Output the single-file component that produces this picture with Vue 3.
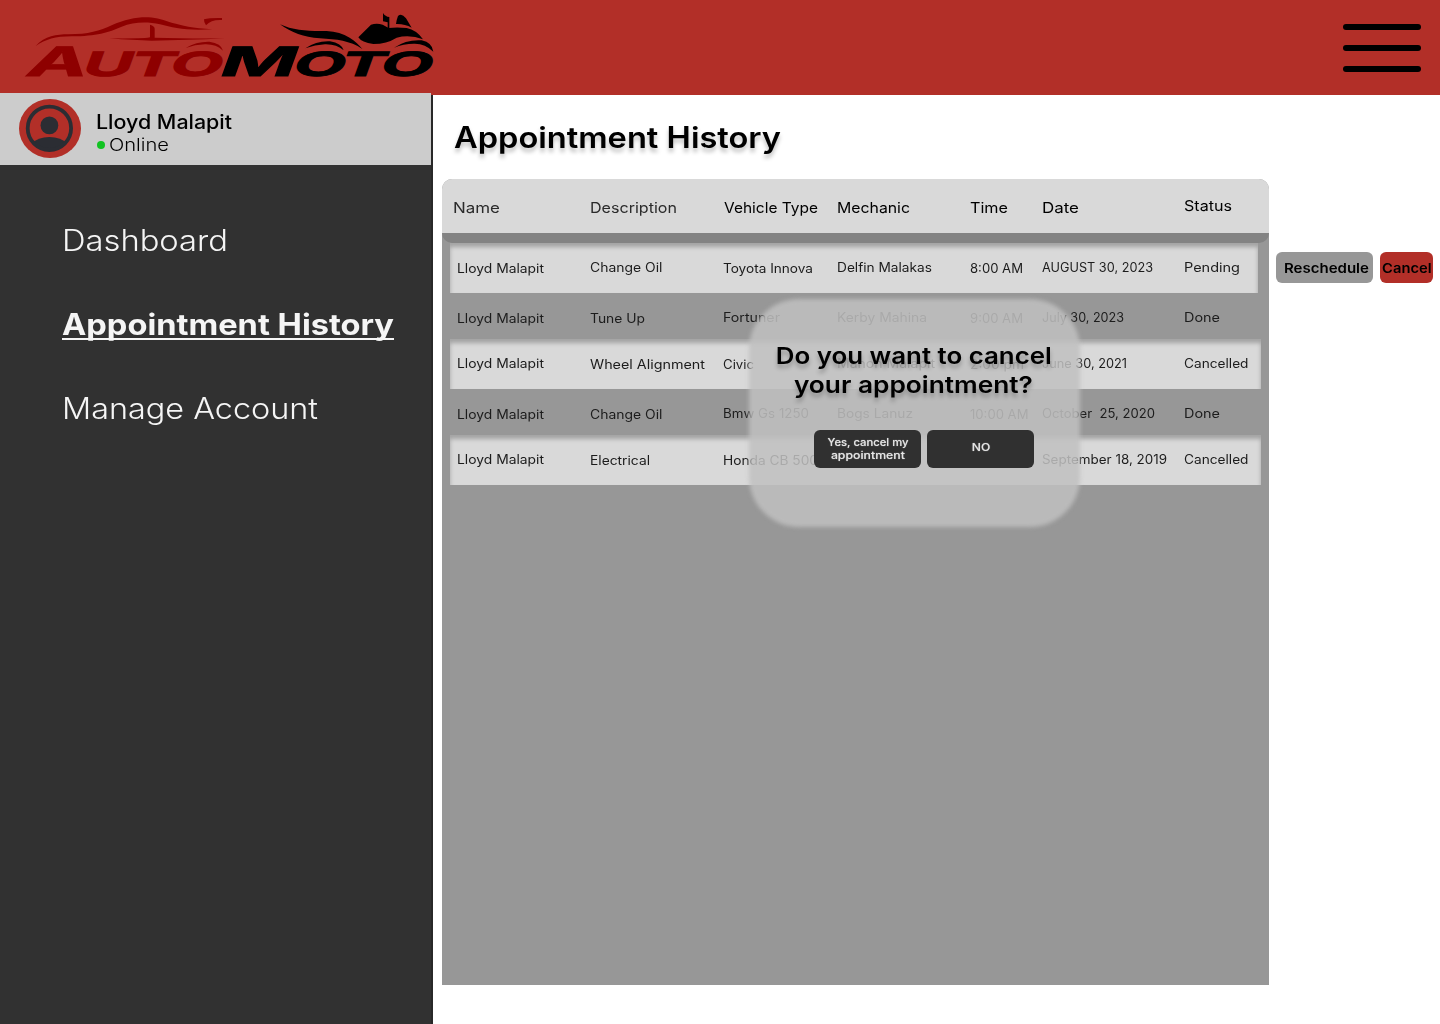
<script setup>
// Widens a label horizontally so that it fills a given width in pixels.
const vFit = {
  mounted(el, { value }) {
    if (!value) return
    const natural = el.getBoundingClientRect().width
    el.style.transform = `scaleX(${(value / natural).toFixed(4)})`
  }
}

const nav = [
  { label: 'Dashboard', width: 166 },
  { label: 'Appointment History', width: 332, active: true },
  { label: 'Manage Account', width: 256 }
]

const columns = [
  { label: 'Name', width: 47 },
  { label: 'Description', width: 87 },
  { label: 'Vehicle Type', width: 94 },
  { label: 'Mechanic', width: 73 },
  { label: 'Time', width: 38 },
  { label: 'Date', width: 37 },
  { label: 'Status', width: 48 }
]

// Each cell: [text, label width, sits one pixel lower]
const rows = [
  [['Lloyd Malapit', 87, true], ['Change Oil', 72.5], ['Toyota Innova', 90, true], ['Delfin Malakas', 95], ['8:00 AM', 53, true], ['AUGUST 30, 2023', 111], ['Pending', 56]],
  [['Lloyd Malapit', 87, true], ['Tune Up', 55, true], ['Fortuner', 57], ['Kerby Mahina', 90], ['9:00 AM', 53, true], ['July 30, 2023', 82], ['Done', 36]],
  [['Lloyd Malapit', 87], ['Wheel Alignment', 115, true], ['Civic', 31, true], ['Manon Malapit', 98], ['2:00 pm', 54, true], ['June 30, 2021', 85], ['Cancelled', 64.5]],
  [['Lloyd Malapit', 87, true], ['Change Oil', 72.5, true], ['Bmw Gs 1250', 86], ['Bogs Lanuz', 76], ['10:00 AM', 58.5, true], ['October\u00a0 25, 2020', 113], ['Done', 36]],
  [['Lloyd Malapit', 87], ['Electrical', 60, true], ['Honda CB 500', 95, true], ['', 0], ['', 0], ['September 18, 2019', 125], ['Cancelled', 64.5]]
]
</script>

<template>
  <div class="page">
    <header class="topbar">
      <svg class="logo" width="440" height="95" viewBox="0 0 440 95">
        <g fill="#8e0000">
          <g transform="scale(.33333)">
            <path d="M107 138C135 108 170 103 205 103C265 103 300 93 335 76C375 58 410 51 445 52C500 55 520 82 637 88C560 93 520 84 480 73C440 64 400 66 365 80C325 98 290 108 215 109C165 109 138 118 107 138Z" />
            <path d="M328 115Q440 116 450 112L450 74Q464 78 464 86L464 113Q560 116 674 115Q560 121 455 122Q400 121 328 115Z" />
            <path d="M612 58Q630 53 666 54L666 60Q634 58 618 76Q611 66 612 58Z" />
            <path d="M557 144Q590 124 628 125Q664 130 669 152Q648 132 615 133Q585 134 557 144Z" />
          </g>
          <g class="word" stroke="#8e0000">
            <text transform="translate(24 75.500) skewX(-20)" font-size="40.500" textLength="60" lengthAdjust="spacingAndGlyphs">A</text>
            <text class="tight" transform="translate(80 75.500) skewX(-20)" font-size="33.500" textLength="137" lengthAdjust="spacingAndGlyphs">UTO</text>
          </g>
        </g>
        <g fill="#000">
          <g transform="translate(210 0) scale(.33333)">
            <path d="M210 73C250 92 300 94 350 93C405 95 440 125 457 147C420 122 380 118 330 115C280 112 245 98 210 73Z" />
            <path d="M286 145Q320 122 360 124Q395 130 401 151Q380 132 345 133Q315 134 286 145Z" />
            <path d="M445 112L483 74Q500 69 518 74L536 84Q560 81 590 84Q620 90 639 118Q600 103 560 113Q530 132 490 132Q455 128 445 112Z" />
            <path d="M519 39V64L533 67V86H538V51Q526 50 519 39Z" />
            <path d="M564 48Q575 38 588 55L605 83Q584 71 558 72Q560 58 564 48Z" />
            <path d="M552 143Q590 118 635 121Q667 128 670 155Q645 130 612 131Q580 131 552 143Z" />
          </g>
          <g class="word" stroke="#000">
            <text transform="translate(217 75.500) skewX(-20)" font-size="40.500" textLength="76" lengthAdjust="spacingAndGlyphs">M</text>
            <text class="tight" transform="translate(290.500 75.500) skewX(-20)" font-size="33.500" textLength="136.500" lengthAdjust="spacingAndGlyphs">OTO</text>
          </g>
        </g>
      </svg>
      <button class="menu" aria-label="Menu"><i></i><i></i><i></i></button>
    </header>

    <div class="body">
      <aside class="sidebar">
        <section class="profile">
          <svg class="avatar" width="62" height="59" viewBox="0 0 62 59">
            <ellipse cx="31" cy="29.5" rx="31" ry="29.5" fill="#b22f28" />
            <clipPath id="face"><circle cx="30.4" cy="29.3" r="22.5" /></clipPath>
            <g fill="#2b2d33">
              <circle cx="30.4" cy="26.4" r="8.9" />
              <path d="M12 45Q19 38 30.400 38T49 45V56H12Z" clip-path="url(#face)" />
            </g>
            <circle cx="30.400" cy="29.300" r="21.700" fill="none" stroke="#2b2d33" stroke-width="3.800" />
          </svg>
          <div class="who">
            <div class="name"><span v-fit="136">Lloyd Malapit</span></div>
            <div class="state"><i class="dot"></i><span v-fit="60">Online</span></div>
          </div>
        </section>
        <nav>
          <a v-for="n in nav" :key="n.label" :class="{ active: n.active }"><span v-fit="n.width">{{ n.label }}</span></a>
        </nav>
      </aside>

      <main>
        <h1><span v-fit="327">Appointment History</span></h1>
        <div class="content">
          <section class="table">
            <div class="head grid">
              <div v-for="c in columns" :key="c.label"><span v-fit="c.width">{{ c.label }}</span></div>
            </div>
            <div class="band"></div>
            <div v-for="(row, i) in rows" :key="i" class="row grid">
              <div v-for="(cell, j) in row" :key="j" :class="{ low: cell[2] }"><span v-fit="cell[1]">{{ cell[0] }}</span></div>
            </div>
            <div class="modal">
              <h2><span v-fit="276">Do you want to cancel</span><br /><span v-fit="239">your appointment?</span></h2>
              <div class="choices">
                <button><span v-fit="81">Yes, cancel my</span><br /><span v-fit="74">appointment</span></button>
                <button class="no"><span v-fit="18.500">NO</span></button>
              </div>
            </div>
          </section>
          <div class="actions">
            <button class="reschedule"><span v-fit="85">Reschedule</span></button>
            <button class="cancel"><span v-fit="49.500">Cancel</span></button>
          </div>
        </div>
      </main>
    </div>
  </div>
</template>

<style>
body {
  background: #fff;
}
</style>

<style scoped>
.page {
  width: 1440px;
  height: 1024px;
  overflow: hidden;
  display: flex;
  flex-direction: column;
  font-family: Inter, "Open Sans", sans-serif;
  color: #000;
}
.page * {
  box-sizing: border-box;
}
button {
  border: 0;
  padding: 0;
  font-family: inherit;
}
span {
  display: inline-block;
  white-space: nowrap;
  transform-origin: 0 50%;
}
h2 span,
button span {
  transform-origin: 50% 50%;
}
.topbar {
  height: 95px;
  flex: none;
  background: #b22f28;
  display: flex;
  justify-content: space-between;
}
.word {
  font-weight: 700;
  stroke-width: 0.8px;
}
.tight {
  letter-spacing: -1.5px;
}
.menu {
  background: none;
  width: 78px;
  margin: 24px 19px 0 0;
  display: flex;
  flex-direction: column;
  gap: 15px;
}
.menu i {
  width: 78px;
  height: 6px;
  border-radius: 3px;
  background: #000;
}
.body {
  flex: 1;
  display: flex;
}
.sidebar {
  width: 433px;
  flex: none;
  background: #313131;
  border-right: 2px solid #282828;
}
.profile {
  height: 72px;
  margin-top: -2px;
  background: #ccc;
  display: flex;
  padding: 6px 0 0 19px;
}
.who {
  margin-left: 15px;
  padding-top: 11px;
}
.name {
  font-size: 19.4px;
  font-weight: 500;
  line-height: 24px;
}
.state {
  display: flex;
  align-items: center;
  font-size: 17.6px;
  font-weight: 300;
  line-height: 22px;
  padding-left: 1px;
}
.dot {
  width: 8px;
  height: 8px;
  border-radius: 50%;
  background: #12c322;
  margin-right: 4px;
}
nav {
  padding: 55px 0 0 62px;
}
nav a {
  display: block;
  height: 84px;
  line-height: 42px;
  font-size: 29.3px;
  font-weight: 300;
  color: #f5f5f5;
}
nav a.active {
  font-weight: 700;
}
nav a.active span {
  text-decoration: underline;
  text-decoration-thickness: 1.5px;
  text-underline-offset: 3px;
  text-decoration-skip-ink: none;
}
main {
  flex: 1;
  padding-left: 9px;
}
h1 {
  margin: 0;
  height: 84px;
  padding: 23px 0 0 12px;
  font-size: 29.2px;
  font-weight: 600;
  line-height: 40px;
  text-shadow: 0 4px 4px rgba(0, 0, 0, 0.25);
}
.content {
  display: flex;
  align-items: flex-start;
}
.table {
  position: relative;
  width: 827px;
  height: 806px;
  background: #979797;
  border-radius: 10px 10px 0 0;
}
.grid {
  display: grid;
  grid-template-columns: 133px 133px 114px 133px 72px 142px 1fr;
}
.head {
  height: 54px;
  padding: 18px 0 0 15px;
  background: #d9d9d9;
  border-radius: 10px 10px 0 0;
  font-size: 14.6px;
  font-weight: 400;
  line-height: 22px;
}
.head div:first-child span {
  margin-left: -4px;
}
.head div:nth-child(3) span {
  margin-left: 1px;
}
.head div:nth-child(-n + 2) {
  color: #2b2b2b;
}
.head div:last-child {
  margin-top: -2px;
}
.band {
  height: 10px;
  background: #838383;
  border-radius: 0 0 10px 10px;
}
.row {
  height: 46px;
  margin: 0 8px;
  padding: 15px 0 0 7px;
  font-size: 12.6px;
  line-height: 20px;
  color: #1c1c1c;
}
.row:nth-child(odd) {
  height: 50px;
  background: #d9d9d9;
  box-shadow: inset 0 4px 4px rgba(0, 0, 0, 0.25);
}
.row:nth-child(3) {
  margin-right: 11px;
}
.low {
  padding-top: 1px;
}
.modal {
  position: absolute;
  left: 306px;
  top: 119px;
  width: 332px;
  height: 229px;
  padding-top: 43px;
}
.modal::before {
  content: "";
  position: absolute;
  inset: 0.5px;
  border-radius: 50px;
  background: rgba(192, 192, 192, 0.86);
  filter: blur(2px);
}
h2 {
  position: relative;
  margin: 0 1px 0 0;
  text-align: center;
  font-size: 23.4px;
  font-weight: 600;
  line-height: 29px;
  text-shadow: 0 4px 4px rgba(0, 0, 0, 0.25);
}
.choices {
  position: relative;
  display: flex;
  gap: 6px;
  padding: 31px 0 0 66px;
}
.choices button {
  width: 107px;
  height: 38px;
  padding-left: 1px;
  border-radius: 6px;
  background: #303030;
  color: #e4e4e4;
  font-size: 10.6px;
  font-weight: 500;
  line-height: 13px;
  text-shadow: 0 0 1px rgba(255, 255, 255, 0.6);
}
.choices .no {
  padding-bottom: 4px;
  padding-left: 2px;
}
.actions {
  display: flex;
  gap: 7px;
  padding: 73px 0 0 7px;
}
.actions button {
  height: 31px;
  border-radius: 6px;
  font-size: 13.6px;
  font-weight: 600;
  color: #000;
}
.actions .reschedule {
  width: 97px;
  padding-left: 3px;
  background: #979797;
}
.actions .cancel {
  width: 53px;
  background: #b22f28;
}
</style>
